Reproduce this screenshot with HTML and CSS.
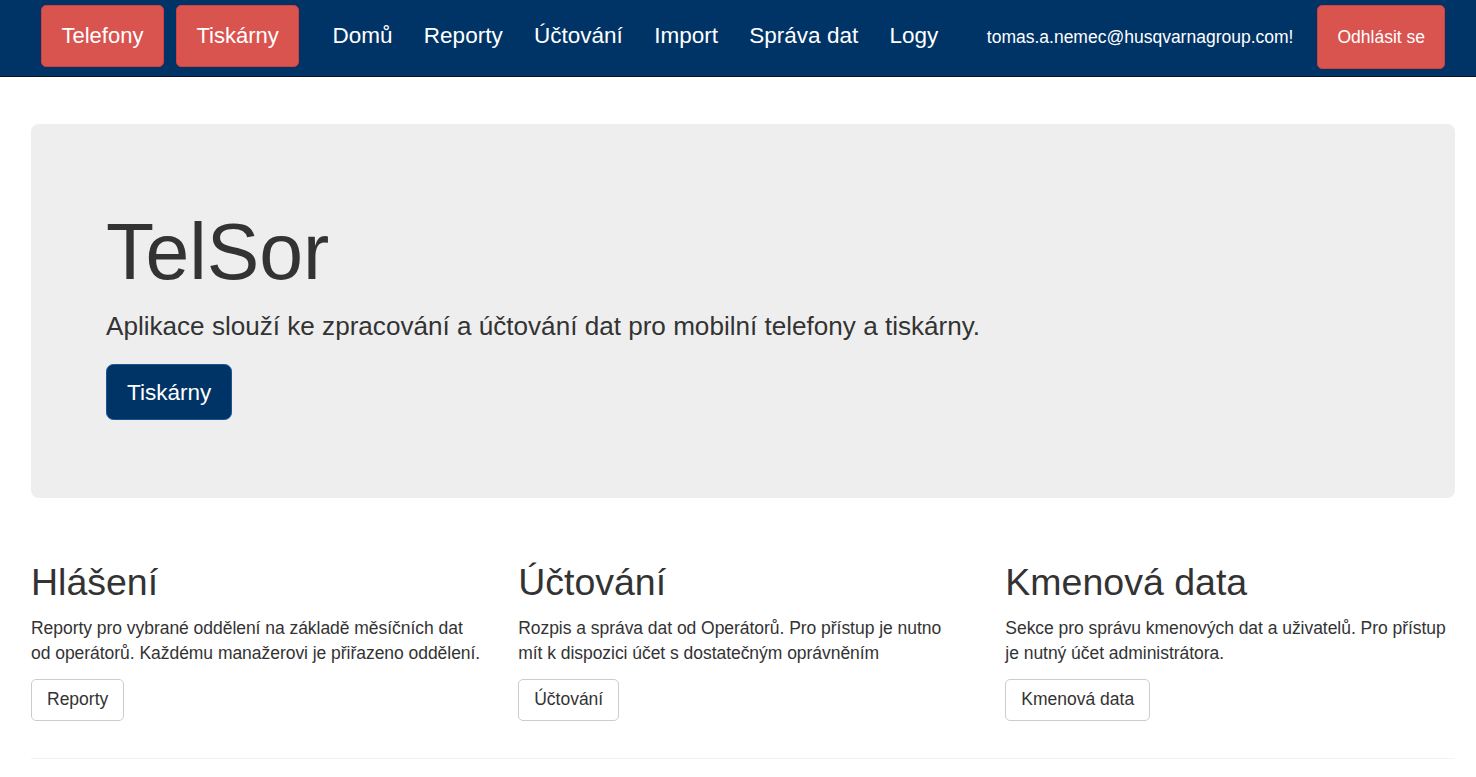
FILE: index.html
```html
<!DOCTYPE html>
<html lang="cs">
<head>
<meta charset="utf-8">
<title>TelSor</title>
<link rel="stylesheet" href="styles.css">
</head>
<body>
<nav class="navbar">
  <div class="nav-left">
    <a class="btn-nav" href="#">Telefony</a>
    <a class="btn-nav" href="#">Tiskárny</a>
    <ul class="nav-links">
      <li><a href="#">Domů</a></li>
      <li><a href="#">Reporty</a></li>
      <li><a href="#">Účtování</a></li>
      <li><a href="#">Import</a></li>
      <li><a href="#">Správa dat</a></li>
      <li><a href="#">Logy</a></li>
    </ul>
  </div>
  <div class="nav-right">
    <span class="user">tomas.a.nemec@husqvarnagroup.com!</span>
    <a class="btn-logout" href="#">Odhlásit se</a>
  </div>
</nav>
<main class="container">
  <section class="jumbotron">
    <h1>TelSor</h1>
    <p class="lead">Aplikace slouží ke zpracování a účtování dat pro mobilní telefony a tiskárny.</p>
    <div class="actions"><a class="btn-primary" href="#">Tiskárny</a></div>
  </section>
  <div class="row">
    <div class="col">
      <h2>Hlášení</h2>
      <p>Reporty pro vybrané oddělení na základě měsíčních dat od operátorů. Každému manažerovi je přiřazeno oddělení.</p>
      <p><a class="btn-default" href="#">Reporty</a></p>
    </div>
    <div class="col">
      <h2>Účtování</h2>
      <p>Rozpis a správa dat od Operátorů. Pro přístup je nutno mít k dispozici účet s dostatečným oprávněním</p>
      <p><a class="btn-default" href="#">Účtování</a></p>
    </div>
    <div class="col">
      <h2>Kmenová data</h2>
      <p>Sekce pro správu kmenových dat a uživatelů. Pro přístup je nutný účet administrátora.</p>
      <p><a class="btn-default" href="#">Kmenová data</a></p>
    </div>
  </div>
  <hr class="divider">
</main>
</body>
</html>
```
FILE: styles.css
```css
* { box-sizing: border-box; }
html, body { margin: 0; padding: 0; }
body {
  font-family: "Liberation Sans", Arial, Helvetica, sans-serif;
  font-size: 17.5px;
  line-height: 25px;
  color: #333;
  background: #fff;
}
a { text-decoration: none; }

.navbar {
  display: flex;
  justify-content: space-between;
  align-items: flex-start;
  height: 77px;
  background: #003366;
  border-bottom: 1px solid #0b1420;
  padding: 5px 31px 0 41px;
}
.nav-left, .nav-right { display: flex; align-items: flex-start; }
.btn-nav {
  display: block;
  height: 62px;
  line-height: 60px;
  padding: 0 19.5px;
  font-size: 22px;
  color: #fff;
  background: #d9534f;
  border: 1px solid #d43f3a;
  border-radius: 5px;
  margin-right: 12px;
}
.nav-links {
  display: flex;
  list-style: none;
  margin: 0 0 0 5.5px;
  padding: 0;
}
.nav-links a {
  display: block;
  height: 62px;
  line-height: 62px;
  padding: 0 15.7px;
  font-size: 22.5px;
  color: #fff;
}
.user {
  color: #fff;
  font-size: 17.5px;
  line-height: 64px;
  margin-right: 24px;
}
.btn-logout {
  display: block;
  height: 64px;
  line-height: 62px;
  padding: 0 19px;
  font-size: 17.5px;
  color: #fff;
  background: #d9534f;
  border: 1px solid #d43f3a;
  border-radius: 5px;
}

.container { padding: 0 21px 0 31px; }

.jumbotron {
  margin-top: 47px;
  margin-bottom: 39px;
  padding: 60px 75px;
  background: #eee;
  border-radius: 7.5px;
}
.jumbotron h1 {
  margin: 25px 0 12.5px;
  font-size: 78.75px;
  line-height: 1.1;
  font-weight: 500;
  color: #333;
}
.jumbotron .lead {
  margin: 0 0 18.75px;
  font-size: 26.1px;
  line-height: 37.5px;
  font-weight: 400;
}
.actions { display: flex; margin-bottom: 18px; }
.btn-primary {
  display: inline-block;
  padding: 12.5px 20px;
  font-size: 22.5px;
  line-height: 29px;
  color: #fff;
  background: #003366;
  border: 1px solid #1e5590;
  border-radius: 7.5px;
}

.row {
  display: grid;
  grid-template-columns: repeat(3, 1fr);
  column-gap: 37.5px;
}
.col h2 {
  margin: 25px 0 12.5px;
  font-size: 37.5px;
  line-height: 41.25px;
  font-weight: 500;
  color: #333;
}
.col p { margin: 0 0 12.5px; letter-spacing: -0.04px; }
.btn-default {
  display: inline-block;
  padding: 7.5px 15px;
  font-size: 17.5px;
  line-height: 25px;
  letter-spacing: 0;
  color: #333;
  background: #fff;
  border: 1px solid #ccc;
  border-radius: 5px;
  vertical-align: top;
}
.divider {
  margin: 25px 0 0;
  border: 0;
  border-top: 1px solid #f3f3f3;
}
```
